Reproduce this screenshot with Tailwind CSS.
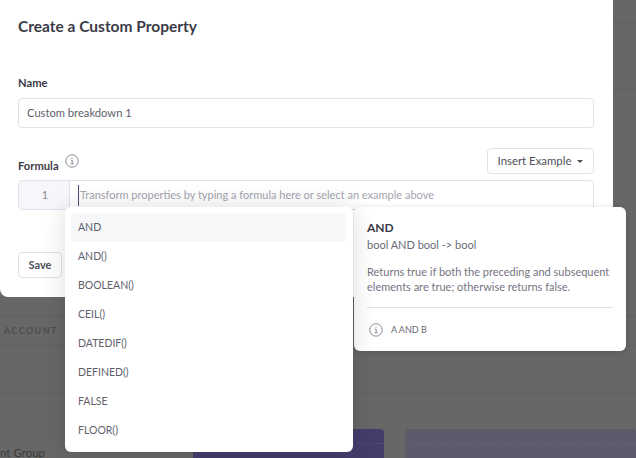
<!DOCTYPE html>
<html lang="en">

<head>
    <meta charset="UTF-8" />
    <title>Create a Custom Property</title>
    <script src="https://cdn.jsdelivr.net/npm/@tailwindcss/browser@4"></script>
</head>

<body class="font-['Lato',sans-serif] text-[#4f4f5c]">
    <div class="relative w-[636px] h-[458px] overflow-hidden bg-[#676767]">

        <!-- Page behind the overlay -->
        <div class="flex flex-col h-full">
            <div class="h-[23px] shrink-0 border-b border-[#5f5f5f]"></div>
            <div class="h-[67px] shrink-0 border-b border-[#5f5f5f]"></div>
            <div class="h-[226px] shrink-0 border-b border-[#5f5f5f]"></div>
            <div class="h-[30px] shrink-0 border-b border-[#5f5f5f] flex items-center pl-1">
                <span class="text-[9px] font-bold tracking-[1.4px] text-[#4e4e4e]">ACCOUNT</span>
            </div>
            <div class="h-[47px] shrink-0 border-b border-[#626262]"></div>
            <div class="flex-1 flex">
                <div class="w-[193px] flex items-end">
                    <span class="text-[11.5px] leading-[16px] -mb-[3px] text-[#3b3b3b] whitespace-nowrap">nt Group</span>
                </div>
                <div class="w-[191px] mt-[36px] bg-[#463c6b] rounded-t-sm">
                    <div class="h-[15px] border-b border-dashed border-[#544b75]"></div>
                </div>
                <div class="w-[231px] ml-[21px] mt-[36px] bg-[#5c5a6b] rounded-t-sm">
                    <div class="h-[15px] border-b border-dashed border-[#666475]"></div>
                </div>
            </div>
        </div>

        <!-- Modal -->
        <div class="absolute left-0 top-[-10px] w-[613px] h-[307px] bg-white rounded-lg pt-[26px] pl-[18px] pr-[19px]">
            <h2 class="text-[15.5px] font-bold leading-[20px] text-[#3b3b47]">Create a Custom Property</h2>

            <label class="block mt-[40px] text-[11.2px] font-bold leading-[14px] text-[#3b3b47]">Name</label>
            <div class="mt-[8px] h-[30px] flex items-center px-[8px] border border-[#e2e0ec] rounded text-[11.2px] text-[#5f5f6c]">Custom breakdown 1</div>

            <div class="mt-[20px] flex justify-between h-[26px]">
                <div class="flex items-start gap-[6px]">
                    <span class="text-[11.2px] font-bold leading-[14px] mt-[11px] text-[#3b3b47]">Formula</span>
                    <svg class="mt-[6px]" width="14" height="14" viewBox="0 0 14 14" fill="none" stroke="#8a8a96">
                        <circle cx="7" cy="7" r="6.2" />
                        <path d="M5.8 6.2H7.2V9.8M5.6 9.8H8.6" />
                        <circle cx="7" cy="4.2" r="0.6" fill="#8a8a96" stroke="none" />
                    </svg>
                </div>
                <button class="h-[26px] w-[107px] flex items-center justify-center gap-[6px] border border-[#e2e0ec] rounded text-[11.4px] text-[#4f4f5c]">
                    Insert Example
                    <span class="w-0 h-0 border-x-[3px] border-x-transparent border-t-[3px] border-t-[#4f4f5c]"></span>
                </button>
            </div>

            <div class="mt-[6px] h-[30px] flex border border-[#e2e0ec] rounded text-[11px] overflow-hidden">
                <div class="w-[51px] bg-[#f6f7fb] border-r border-[#e2e0ec] flex items-center justify-center pl-[2px] text-[#8a8a96]">1</div>
                <div class="flex items-center pl-[8px] text-[#a5a5b0]">
                    <span class="w-px h-[21px] bg-[#4c4580] mr-[1px]"></span>
                    Transform properties by typing a formula here or select an example above
                </div>
            </div>

            <button class="mt-[42px] h-[26px] w-[44px] border border-[#e2e0ec] rounded text-[11px] font-bold text-[#4f4f5c]">Save</button>
        </div>

        <!-- Function detail -->
        <div class="absolute left-[354px] top-[207px] w-[272px] h-[144px] bg-white rounded-md shadow-[0_1px_6px_rgba(0,0,0,0.14)] pt-[14px] px-[13px]">
            <div class="text-xs font-bold leading-[14px] text-[#3b3b47]">AND</div>
            <div class="mt-[2px] text-[11px] leading-[16px] text-[#6a6a76]">bool AND bool -&gt; bool</div>
            <p class="mt-[11px] text-[11px] leading-[15px] text-[#74747f]">Returns true if both the preceding and subsequent elements are true; otherwise returns false.</p>
            <div class="mt-[13px] pt-[15px] border-t border-[#e2e0ec] flex items-center gap-[8px] pl-[2px] text-[9px] text-[#6a6a76]">
                <svg width="14" height="14" viewBox="0 0 14 14" fill="none" stroke="#8a8a96">
                    <circle cx="7" cy="7" r="6.2" />
                    <path d="M5.8 6.2H7.2V9.8M5.6 9.8H8.6" />
                    <circle cx="7" cy="4.2" r="0.6" fill="#8a8a96" stroke="none" />
                </svg>
                A AND B
            </div>
        </div>

        <!-- Function dropdown, its shadow falls on the detail card -->
        <div class="absolute left-[65px] top-[207px] w-[288px] h-[245px] bg-white rounded-md shadow-[0_0_24px_rgba(0,0,0,0.14)] p-[6px] text-[10.5px] text-[#5f5f6c]">
            <ul class="flex flex-col w-[275px]">
                <li class="h-[29px] flex items-center pl-[7px] bg-[#f6f7f9] rounded-sm">AND</li>
                <li class="h-[29px] flex items-center pl-[7px]">AND()</li>
                <li class="h-[29px] flex items-center pl-[7px]">BOOLEAN()</li>
                <li class="h-[29px] flex items-center pl-[7px]">CEIL()</li>
                <li class="h-[29px] flex items-center pl-[7px]">DATEDIF()</li>
                <li class="h-[29px] flex items-center pl-[7px]">DEFINED()</li>
                <li class="h-[29px] flex items-center pl-[7px]">FALSE</li>
                <li class="h-[29px] flex items-center pl-[7px]">FLOOR()</li>
            </ul>
        </div>
    </div>
</body>

</html>
